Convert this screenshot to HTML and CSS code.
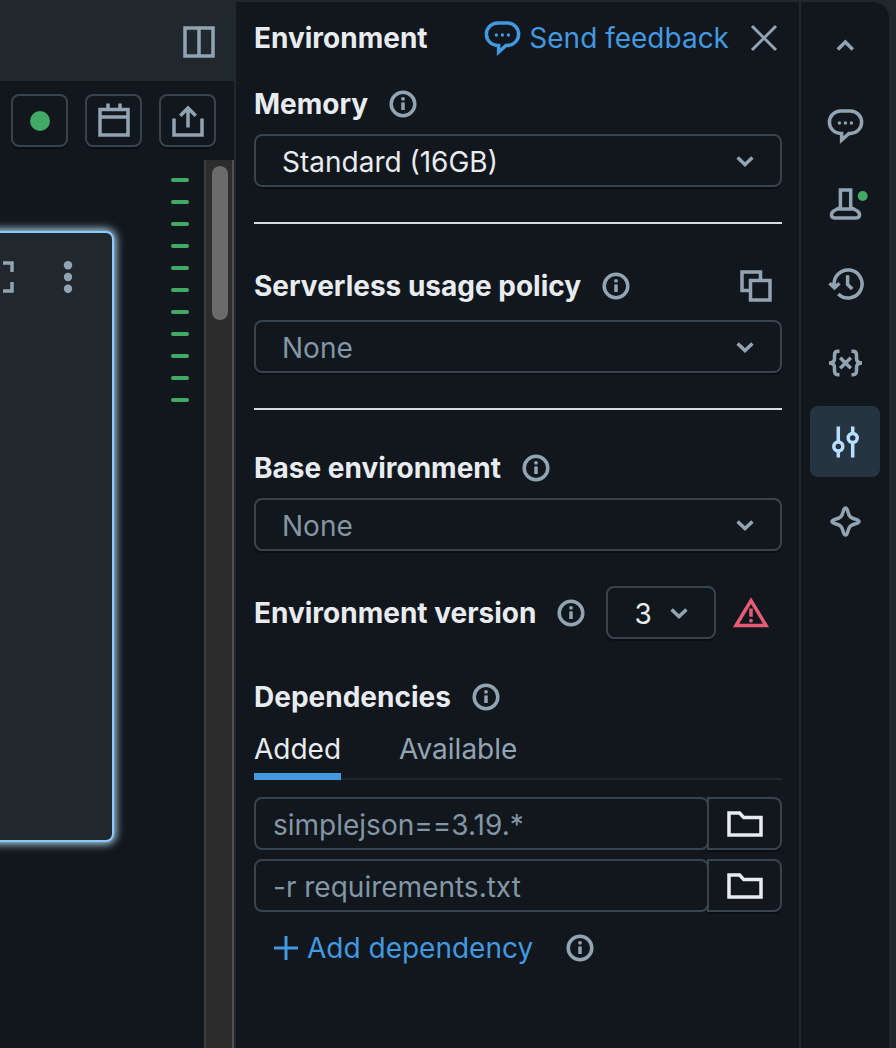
FILE: index.html
```html
<!DOCTYPE html>
<html lang="en">
<head>
<meta charset="utf-8">
<meta name="viewport" content="width=device-width, initial-scale=1">
<title>Environment</title>
<link rel="stylesheet" href="styles.css">
</head>
<body>
<svg class="sprite" aria-hidden="true">
  <symbol id="info" viewBox="0 0 28 28"><circle cx="14" cy="14" r="11.8"/><path d="M14 12.4V20"/><circle class="fill" cx="14" cy="8.8" r="1.9"/></symbol>
  <symbol id="down" viewBox="0 0 20 14"><path d="M2.6 3.5l7.4 7 7.4-7"/></symbol>
  <symbol id="speech" viewBox="0 0 40 40"><path d="M16.6 27.4H15.6A11.2 11.2 0 0 1 15.6 5h9.8a11.2 11.2 0 0 1 0 22.4H24L16.6 34z"/><g class="fill"><circle cx="14.4" cy="17" r="1.7"/><circle cx="20.4" cy="17" r="1.7"/><circle cx="26.4" cy="17" r="1.7"/></g></symbol>
  <symbol id="folder" viewBox="0 0 36 28"><path d="M2 25V3h10.600l4.200 4.600h17.200v17.400z"/></symbol>
</svg>
<div class="app">
  <main class="workspace">
    <div class="topbar">
      <button class="icon-button" aria-label="Split view"><svg class="icon icon-l" viewBox="0 0 32 32"><path d="M2 2h28v28H2zM16 2v28"/></svg></button>
    </div>
    <div class="toolbar">
      <button class="tool" aria-label="Connected"><span class="status"></span></button>
      <button class="tool" aria-label="Schedule"><svg class="icon icon-xl" viewBox="0 0 40 40"><path d="M6 8.6h28V34H6zM6 16h28M14 2.5v6M26 2.5v6"/></svg></button>
      <button class="tool" aria-label="Share"><svg class="icon icon-xl" viewBox="0 0 40 40"><path d="M6 17.5V34h28V17.5M20 26.5V7M12.3 14.8L20 7l7.7 7.8"/></svg></button>
    </div>
    <div class="editor">
      <section class="cell" aria-label="Cell">
        <button class="icon-button" aria-label="Expand"><svg class="icon icon-l" viewBox="0 0 32 32"><path d="M2 11V2h9M21 2h9v9M30 21v9h-9M11 30H2v-9"/></svg></button>
        <button class="icon-button" aria-label="More"><svg class="icon icon-l" viewBox="0 0 32 32"><g class="fill"><circle cx="16" cy="4.3" r="4.2"/><circle cx="16" cy="16" r="4.2"/><circle cx="16" cy="27.7" r="4.2"/></g></svg></button>
      </section>
      <div class="minimap"><i></i><i></i><i></i><i></i><i></i><i></i><i></i><i></i><i></i><i></i><i></i></div>
      <div class="scrollbar"><div class="thumb"></div></div>
    </div>
  </main>
  <div class="side">
    <aside class="panel">
      <header class="panel-head">
        <h1 class="title">Environment</h1>
        <a class="link feedback" href="#"><svg class="icon icon-xl"><use href="#speech"/></svg>Send feedback</a>
        <button class="icon-button close" aria-label="Close"><svg class="icon icon-m" viewBox="0 0 28 28"><path d="M2 2l24 24M26 2L2 26"/></svg></button>
      </header>

      <section class="group memory">
        <div class="row"><label class="title" for="memory">Memory</label><button class="icon-button" aria-label="About memory"><svg class="icon icon-m"><use href="#info"/></svg></button></div>
        <div class="picker"><select id="memory"><option>Standard (16GB)</option></select><svg class="icon caret"><use href="#down"/></svg></div>
      </section>
      <hr class="rule">
      <section class="group policy">
        <div class="row"><label class="title" for="policy">Serverless usage policy</label><button class="icon-button" aria-label="About usage policy"><svg class="icon icon-m"><use href="#info"/></svg></button>
          <button class="icon-button copy" aria-label="Copy"><svg class="icon icon-l" viewBox="0 0 32 32"><path d="M10.5 10.5h19.500v19.500h-19.500zM10 20.500H2V2H20.500V10"/></svg></button></div>
        <div class="picker muted"><select id="policy"><option>None</option></select><svg class="icon caret"><use href="#down"/></svg></div>
      </section>
      <hr class="rule">
      <section class="group base">
        <div class="row"><label class="title" for="base">Base environment</label><button class="icon-button" aria-label="About base environment"><svg class="icon icon-m"><use href="#info"/></svg></button></div>
        <div class="picker muted"><select id="base"><option>None</option></select><svg class="icon caret"><use href="#down"/></svg></div>
      </section>
      <section class="row version">
        <label class="title" for="version">Environment version</label><button class="icon-button" aria-label="About environment version"><svg class="icon icon-m"><use href="#info"/></svg></button>
        <div class="picker small"><select id="version"><option>3</option></select><svg class="icon caret"><use href="#down"/></svg></div>
        <svg class="icon warning" viewBox="0 0 36 32" role="img" aria-label="Warning"><path d="M18 3.600L33 28.500H3zM18 11.500v8.300"/><circle class="fill" cx="18" cy="23.700" r="1.900"/></svg>
      </section>
      <section class="dependencies">
        <div class="row"><h2 class="title">Dependencies</h2><button class="icon-button" aria-label="About dependencies"><svg class="icon icon-m"><use href="#info"/></svg></button></div>
        <div class="tabs" role="tablist">
          <button class="tab active" role="tab" aria-selected="true">Added</button>
          <button class="tab" role="tab" aria-selected="false">Available</button>
        </div>
        <div class="files">
          <div class="file"><input type="text" aria-label="Dependency 1" placeholder="simplejson==3.19.*"><button class="browse" aria-label="Browse"><svg class="icon folder"><use href="#folder"/></svg></button></div>
          <div class="file"><input type="text" aria-label="Dependency 2" placeholder="-r requirements.txt"><button class="browse" aria-label="Browse"><svg class="icon folder"><use href="#folder"/></svg></button></div>
        </div>
        <div class="row add">
          <button class="link"><svg class="icon plus" viewBox="0 0 24 24"><path d="M12 0v24M0 12h24"/></svg>Add dependency</button>
          <button class="icon-button" aria-label="About adding a dependency"><svg class="icon icon-m"><use href="#info"/></svg></button>
        </div>
      </section>
    </aside>
    <nav class="rail" aria-label="Panels">
      <button class="rail-item" aria-label="Collapse"><svg class="icon icon-xl" viewBox="0 0 40 40"><path d="M12.8 22.500l7.500-7.500 7.500 7.500"/></svg></button>
      <button class="rail-item" aria-label="Comments"><svg class="icon icon-xl"><use href="#speech"/></svg></button>
      <button class="rail-item" aria-label="Experiments"><svg class="icon icon-xl" viewBox="0 0 40 40"><path d="M15.400 21.500V5H25.700V21.500C26.600 24 31 24.500 33 26.500C35.800 29.500 34.500 33 31 33H10C6.500 33 5.200 29.500 8 26.500C10 24.500 14.500 24 15.400 21.500zM11 24H30"/><circle class="dot" cx="37.700" cy="11" r="5"/></svg></button>
      <button class="rail-item" aria-label="Version history"><svg class="icon icon-xl" viewBox="0 0 40 40"><path d="M13.300 30A14 14 0 1 0 9.300 22.500M4.500 19.300l5 4.500 5-4.500M22.600 11.300v9.200l4.600 4.600"/></svg></button>
      <button class="rail-item" aria-label="Variables"><svg class="icon icon-xl" viewBox="0 0 40 40"><path d="M14.500 8.300h-1.500c-2.500 0-3.500 1.500-3.500 3.700v3.500c0 3-1.500 4.500-5.500 4.500 4 0 5.500 1.500 5.500 4.500v3.500c0 2.200 1 3.700 3.500 3.700h1.500M26.500 8.300h1.500c2.500 0 3.500 1.500 3.500 3.700v3.500c0 3 1.500 4.500 5.500 4.500-4 0-5.500 1.500-5.500 4.500v3.500c0 2.200-1 3.700-3.500 3.700h-1.500M15.200 14.700l10.600 10.600M25.800 14.700L15.200 25.300"/></svg></button>
      <button class="rail-item active" aria-label="Environment"><svg class="icon icon-xl" viewBox="0 0 40 40"><path d="M13.300 4.500V20M13.300 29v6.500M27.700 4.500v7M27.700 20.500v15"/><circle cx="13.300" cy="24.500" r="4.500"/><circle cx="27.700" cy="16" r="4.500"/></svg></button>
      <button class="rail-item" aria-label="Assistant"><svg class="icon icon-xl" viewBox="0 0 40 40"><path d="M20.500 7C21.800 7 22.200 8.200 22.800 10.500C24 15.500 25.500 17 30.500 18.200C32.800 18.800 34 19.200 34 20.500S32.800 22.200 30.500 22.800C25.500 24 24 25.500 22.800 30.500C22.200 32.800 21.800 34 20.500 34S18.800 32.800 18.200 30.500C17 25.500 15.500 24 10.500 22.800C8.200 22.200 7 21.800 7 20.500S8.200 18.800 10.500 18.200C15.500 17 17 15.500 18.200 10.500C18.800 8.200 19.200 7 20.500 7z"/></svg></button>
    </nav>
  </div>
</div>
</body>
</html>
```
FILE: styles.css
```css
:root {
  --bg: #11171d;
  --raised: #20272d;
  --line: #37444f;
  --text: #e8ecf0;
  --muted: #92a4b3;
  --placeholder: #8396a5;
  --blue: #4299e0;
  --green: #42a865;
}
* { box-sizing: border-box; }
body {
  margin: 0;
  background: var(--bg);
  color: var(--text);
  font-family: Inter, "Liberation Sans", sans-serif;
  font-size: 28px;
  line-height: 34px;
}
button, input, select { font: inherit; color: inherit; background: none; border: 0; padding: 0; margin: 0; }
.sprite { position: absolute; width: 0; height: 0; }
.app { display: flex; min-height: 100vh; }

.icon { display: block; flex: none; fill: none; stroke: currentColor; stroke-width: 3.5; overflow: visible; color: var(--muted); }
.icon-m { width: 28px; height: 28px; }
.icon-l { width: 32px; height: 32px; }
.icon-xl { width: 40px; height: 40px; }
.fill { fill: currentColor; stroke: none; }
.dot { fill: var(--green); stroke: none; }
.icon-button { display: block; flex: none; }

.workspace { flex: none; width: 234px; display: flex; flex-direction: column; overflow: hidden; }
.topbar { display: flex; justify-content: flex-end; align-items: center; height: 81px; padding: 2px 19px 0 0; background: var(--raised); }
.toolbar { display: flex; justify-content: flex-end; gap: 17px; padding: 13px 18px 13px 0; height: 79px; }
.tool {
  display: flex; flex: none; align-items: center; justify-content: center;
  width: 57px; height: 53px;
  border: 2px solid var(--line); border-radius: 8px;
  box-shadow: 0 2px 0 #0b0f12;
}
.status { width: 20px; height: 20px; border-radius: 50%; background: var(--green); }
.editor { flex: 1; display: flex; }
.cell {
  flex: 1; display: flex; justify-content: flex-end; align-items: flex-start; gap: 38px;
  height: 611px; margin: 71px 0 0 -60px; padding: 28px 28px;
  background: var(--raised);
  border: 2px solid #8acaff; border-radius: 8px;
  box-shadow: 0 0 8px 2px #b5d9ee;
}
.minimap { display: flex; flex-direction: column; gap: 18px; margin: 18px 15px 0 57px; }
.minimap i { width: 18px; height: 4px; border-radius: 2px; background: var(--green); }
.scrollbar { width: 30px; padding: 6px; background: #2c2c2c; border-left: 2px solid #3e3e3e; border-right: 2px solid #505050; }
.thumb { width: 16px; height: 154px; border-radius: 8px; background: #6b6b6b; }

.side { flex: 1; display: flex; min-width: 0; padding: 2px 7px 0 2px; background: var(--raised); }
.panel { flex: 1; min-width: 0; padding: 0 17px 40px 18px; background: var(--bg); }
.title { margin: 0; font-size: 28px; line-height: 34px; font-weight: 700; white-space: nowrap; }
.panel-head { display: flex; align-items: center; height: 72px; }
.link { display: flex; align-items: center; color: var(--blue); text-decoration: none; white-space: nowrap; }
.link .icon { color: inherit; }
.feedback { gap: 7px; margin-left: auto; }
.close { margin: 0 4px 0 21px; }
.close .icon { stroke-width: 3; }
.row { display: flex; align-items: center; gap: 21px; }
.copy { margin-left: auto; margin-right: 10px; }
.group { display: flex; flex-direction: column; gap: 13px; }
.memory { padding-top: 13px; }
.policy { padding-top: 45px; gap: 17px; }
.base { padding-top: 41px; }
.rule { height: 2px; margin: 35px 0 0; border: 0; background: #d5dde3; }
.picker { position: relative; }
.picker select {
  display: block; width: 100%; height: 53px; padding: 2px 60px 0 26px;
  appearance: none;
  border: 2px solid var(--line); border-radius: 8px;
  background: var(--bg);
  box-shadow: 0 2px 0 #0b0f12;
}
.picker.small select { padding-right: 0; }
.picker.muted select { color: var(--placeholder); }
.caret { position: absolute; right: 27px; top: 20px; width: 20px; height: 14px; pointer-events: none; }
.version { margin-top: 35px; }
.picker.small { width: 110px; }
.warning { width: 36px; height: 32px; color: #e65b77; margin-left: -4px; }
.dependencies { margin-top: 41px; }
.tabs { display: flex; gap: 58px; height: 58px; margin-top: 8px; border-bottom: 2px solid #20272e; }
.tab { height: 58px; padding: 4px 0 2px; color: var(--muted); border-bottom: 7px solid transparent; }
.tab.active { color: var(--text); border-color: var(--blue); }
.files { display: flex; flex-direction: column; gap: 9px; margin-top: 17px; }
.file { display: flex; }
.file input { flex: 1; min-width: 0; height: 53px; padding: 2px 17px 0; border: 2px solid var(--line); border-radius: 8px; }
.file input::placeholder { color: var(--placeholder); opacity: 1; }
.browse {
  display: flex; align-items: center; justify-content: center;
  width: 75px; height: 53px; margin-left: -2px;
  border: 2px solid var(--line); border-radius: 0 8px 8px 0;
  box-shadow: 0 2px 0 #0b0f12;
}
.folder { width: 36px; height: 28px; color: var(--text); }
.add { margin-top: 19px; padding-left: 20px; gap: 33px; }
.add .link { gap: 9px; }
.plus { width: 24px; height: 24px; stroke-width: 3; }

.rail {
  flex: none; display: flex; flex-direction: column; align-items: center; gap: 8px;
  width: 90px; padding-top: 9px;
  background: var(--bg);
  border-left: 2px solid var(--raised); border-top-right-radius: 16px;
}
.rail-item { display: flex; align-items: center; justify-content: center; width: 70px; height: 71px; border-radius: 8px; }
.rail-item.active { background: #253440; }
.rail-item.active .icon { color: #b5e0ff; }
```
